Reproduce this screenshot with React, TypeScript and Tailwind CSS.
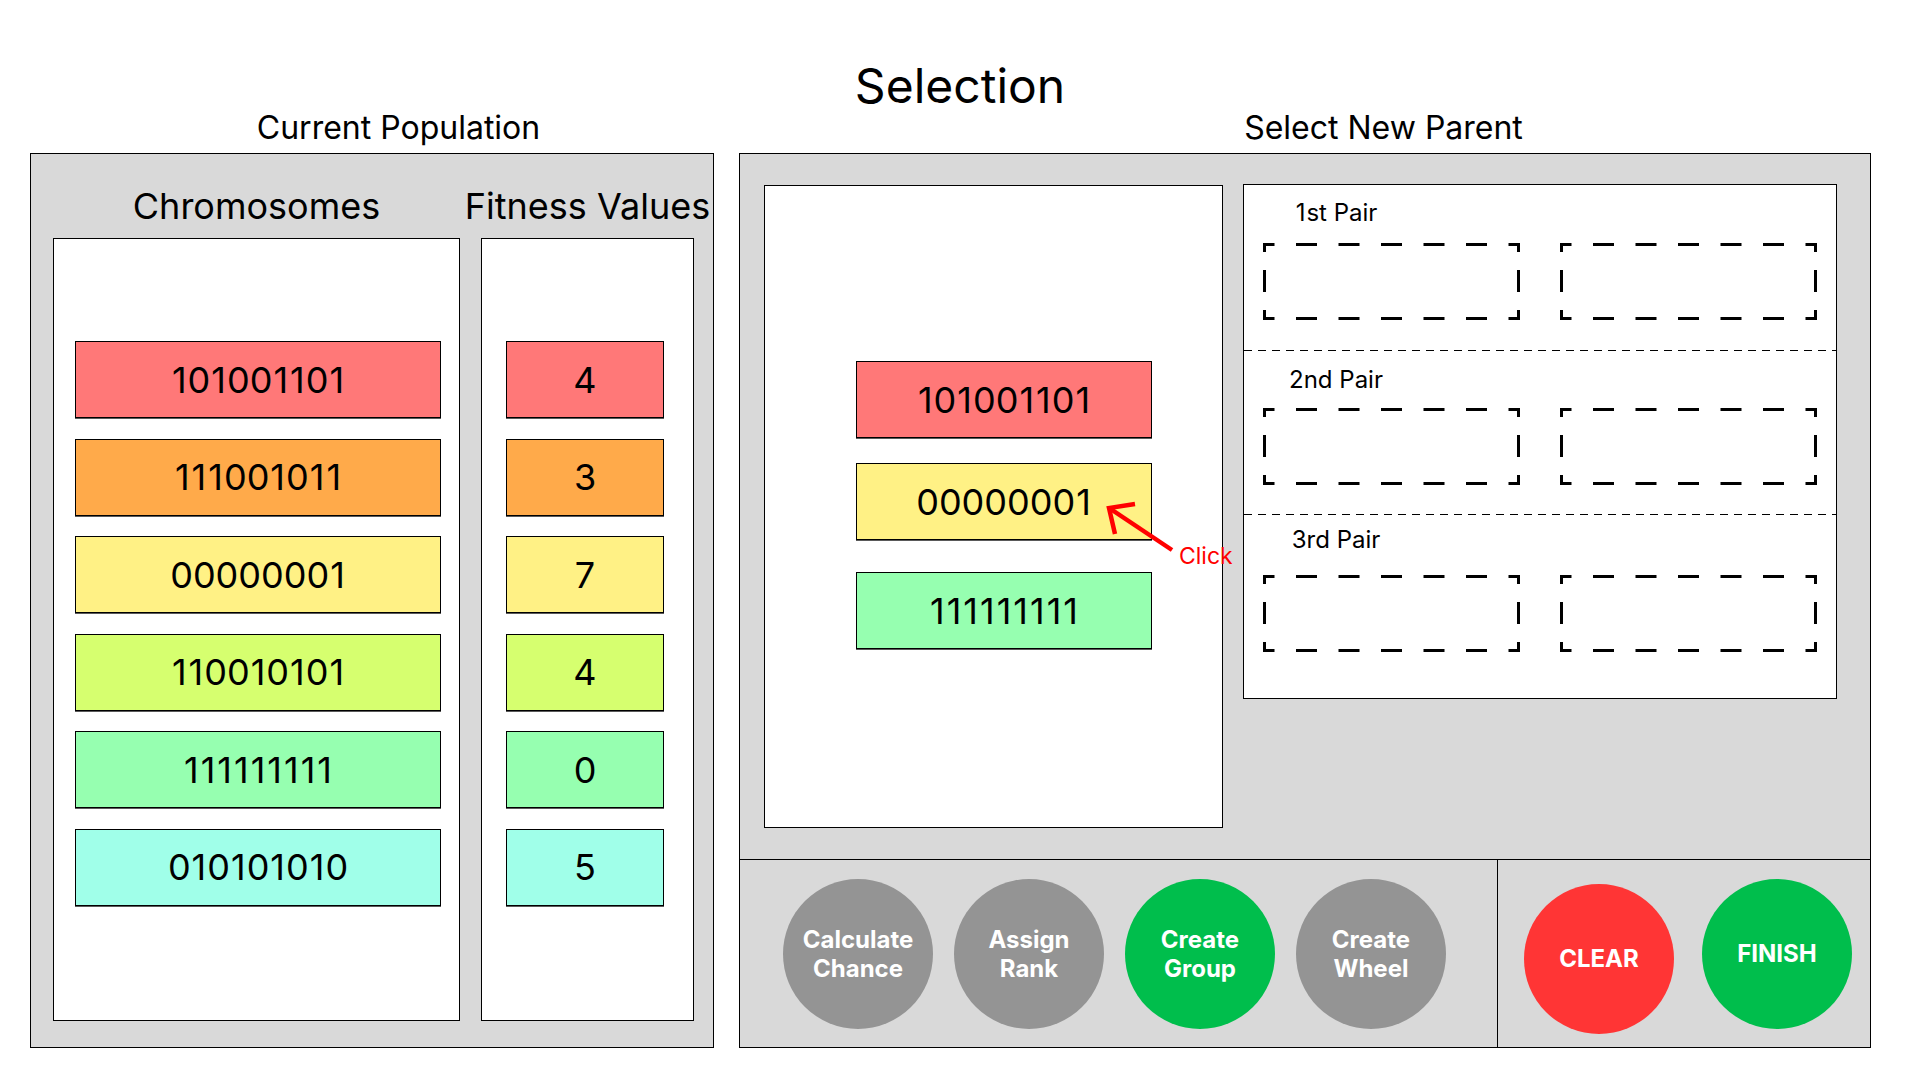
import React from "react";

const rows = [
  { bin: "101001101", fit: "4", color: "bg-[#ff7878]" },
  { bin: "111001011", fit: "3", color: "bg-[#ffaa4a]" },
  { bin: "00000001", fit: "7", color: "bg-[#fff185]" },
  { bin: "110010101", fit: "4", color: "bg-[#d6ff6f]" },
  { bin: "111111111", fit: "0", color: "bg-[#96ffb0]" },
  { bin: "010101010", fit: "5", color: "bg-[#a0ffe9]" },
];

function Wide({ text }: { text: string }) {
  return (
    <>
      {text.split("").map((c, i) =>
        c === "1" ? (
          <span key={i} className="mx-[1px]">
            1
          </span>
        ) : (
          <span key={i}>{c}</span>
        )
      )}
    </>
  );
}

function Chip({ text, color, w }: { text: string; color: string; w: string }) {
  return (
    <div
      className={`${color} ${w} h-[77px] shrink-0 border border-black shadow-[0_1px_0_#5a5a5a] flex items-center justify-center text-[36px] leading-none text-black`}
    >
      <span>
        <Wide text={text} />
      </span>
    </div>
  );
}

function DashedBox() {
  return (
    <svg width="257" height="77" viewBox="0 0 257 77" className="shrink-0 block">
      <g stroke="#000" strokeWidth="3" fill="none">
        <line x1="0" y1="1.5" x2="257" y2="1.5" strokeDasharray="21 21.5" strokeDashoffset="9.5" />
        <line x1="0" y1="75.5" x2="257" y2="75.5" strokeDasharray="21 21.5" strokeDashoffset="9.5" />
        <line x1="1.5" y1="0" x2="1.5" y2="77" strokeDasharray="22 18" strokeDashoffset="13" />
        <line x1="255.5" y1="0" x2="255.5" y2="77" strokeDasharray="22 18" strokeDashoffset="13" />
      </g>
    </svg>
  );
}

function PairSection({
  label,
  h,
  pt,
  mt,
}: {
  label: string;
  h: string;
  pt: string;
  mt: string;
}) {
  return (
    <div className={`${h} ${pt} shrink-0 flex flex-col`}>
      <div className="w-[184px] flex justify-center whitespace-nowrap text-[24px] leading-[26px] text-black">
        <span>
          <Wide text={label} />
        </span>
      </div>
      <div className={`${mt} pl-[19px] flex gap-[40px]`}>
        <DashedBox />
        <DashedBox />
      </div>
    </div>
  );
}

function ThinDash() {
  return (
    <div className="h-px w-full shrink-0 bg-[repeating-linear-gradient(to_right,#000_0px,#000_8px,transparent_8px,transparent_14px)]" />
  );
}

function Circle({
  lines,
  color,
  extra = "",
}: {
  lines: string[];
  color: string;
  extra?: string;
}) {
  return (
    <div
      className={`${color} ${extra} w-[150px] h-[150px] shrink-0 rounded-full flex flex-col items-center justify-center text-white font-bold text-[24px] leading-[29px] text-center`}
    >
      {lines.map((l) => (
        <div key={l}>{l}</div>
      ))}
    </div>
  );
}

export default function App() {
  return (
    <div className="w-[1920px] h-[1080px] bg-white font-['Inter',sans-serif] text-black overflow-hidden">
      <div className="pt-[60px] h-[112px] text-center text-[48px] leading-[52px]">Selection</div>
      <div className="flex pl-[30px] gap-[25px]">
        {/* Left column */}
        <div className="flex flex-col">
          <div className="h-[32px] pl-[53px] flex justify-center whitespace-nowrap text-[32px] leading-[32px]">
            Current Population
          </div>
          <div className="mt-[9px] w-[684px] h-[895px] border border-black bg-[#d9d9d9] pt-[30px] pl-[22px] flex gap-[21px]">
            <div className="flex flex-col w-[407px]">
              <div className="h-[44px] flex justify-center whitespace-nowrap text-[36px] leading-[44px]">
                Chromosomes
              </div>
              <div className="mt-[10px] h-[783px] border border-black bg-white pt-[102px] pl-[21px] flex flex-col gap-[20.6px]">
                {rows.map((r) => (
                  <Chip key={r.bin} text={r.bin} color={r.color} w="w-[366px]" />
                ))}
              </div>
            </div>
            <div className="flex flex-col w-[213px]">
              <div className="h-[44px] flex justify-center whitespace-nowrap text-[36px] leading-[44px]">
                Fitness Values
              </div>
              <div className="mt-[10px] h-[783px] border border-black bg-white pt-[102px] pl-[24px] flex flex-col gap-[20.6px]">
                {rows.map((r, i) => (
                  <Chip key={i} text={r.fit} color={r.color} w="w-[158px]" />
                ))}
              </div>
            </div>
          </div>
        </div>

        {/* Right column */}
        <div className="flex flex-col">
          <div className="h-[32px] pl-[157px] flex justify-center whitespace-nowrap text-[32px] leading-[32px]">
            Select New Parent
          </div>
          <div className="mt-[9px] w-[1132px] h-[895px] border border-black bg-[#d9d9d9] flex flex-col relative">
            <div className="h-[705px] shrink-0 flex pl-[24px] pt-[31px] gap-[20px]">
              <div className="w-[459px] h-[643px] border border-black bg-white pt-[175px] pl-[91px] flex flex-col">
                <Chip text="101001101" color="bg-[#ff7878]" w="w-[296px]" />
                <div className="mt-[25px]">
                  <Chip text="00000001" color="bg-[#fff185]" w="w-[296px]" />
                </div>
                <div className="mt-[32px]">
                  <Chip text="111111111" color="bg-[#96ffb0]" w="w-[296px]" />
                </div>
              </div>
              <div className="-mt-px w-[594px] h-[515px] border border-black bg-white flex flex-col">
                <PairSection label="1st Pair" h="h-[165px]" pt="pt-[15px]" mt="mt-[17px]" />
                <ThinDash />
                <PairSection label="2nd Pair" h="h-[163px]" pt="pt-[16px]" mt="mt-[15px]" />
                <ThinDash />
                <PairSection label="3rd Pair" h="h-[182px]" pt="pt-[12px]" mt="mt-[22px]" />
              </div>
            </div>
            <div className="flex-1 border-t border-black flex">
              <div className="w-[757px] shrink-0 flex items-center pl-[43px] gap-[21px]">
                <Circle lines={["Calculate", "Chance"]} color="bg-[#949494]" />
                <Circle lines={["Assign", "Rank"]} color="bg-[#949494]" />
                <Circle lines={["Create", "Group"]} color="bg-[#00be4c]" />
                <Circle lines={["Create", "Wheel"]} color="bg-[#949494]" />
              </div>
              <div className="flex-1 border-l border-black flex items-center pl-[26px] gap-[28px]">
                <Circle lines={["CLEAR"]} color="bg-[#ff3535]" extra="mt-[10px]" />
                <Circle lines={["FINISH"]} color="bg-[#00be4c]" />
              </div>
            </div>

            {/* Click annotation overlay */}
            <svg
              width="80"
              height="60"
              viewBox="0 0 80 60"
              className="absolute left-[360px] top-[341px]"
            >
              <g stroke="#ff0000" strokeWidth="4.5" fill="none" strokeLinecap="butt" strokeLinejoin="miter">
                <line x1="9" y1="13" x2="72" y2="55" />
                <polyline points="35,9 9,13 15,39" />
              </g>
            </svg>
            <div className="absolute left-[439px] top-[388px] text-[23px] leading-[28px] text-[#ff0000]">Click</div>
          </div>
        </div>
      </div>
    </div>
  );
}
